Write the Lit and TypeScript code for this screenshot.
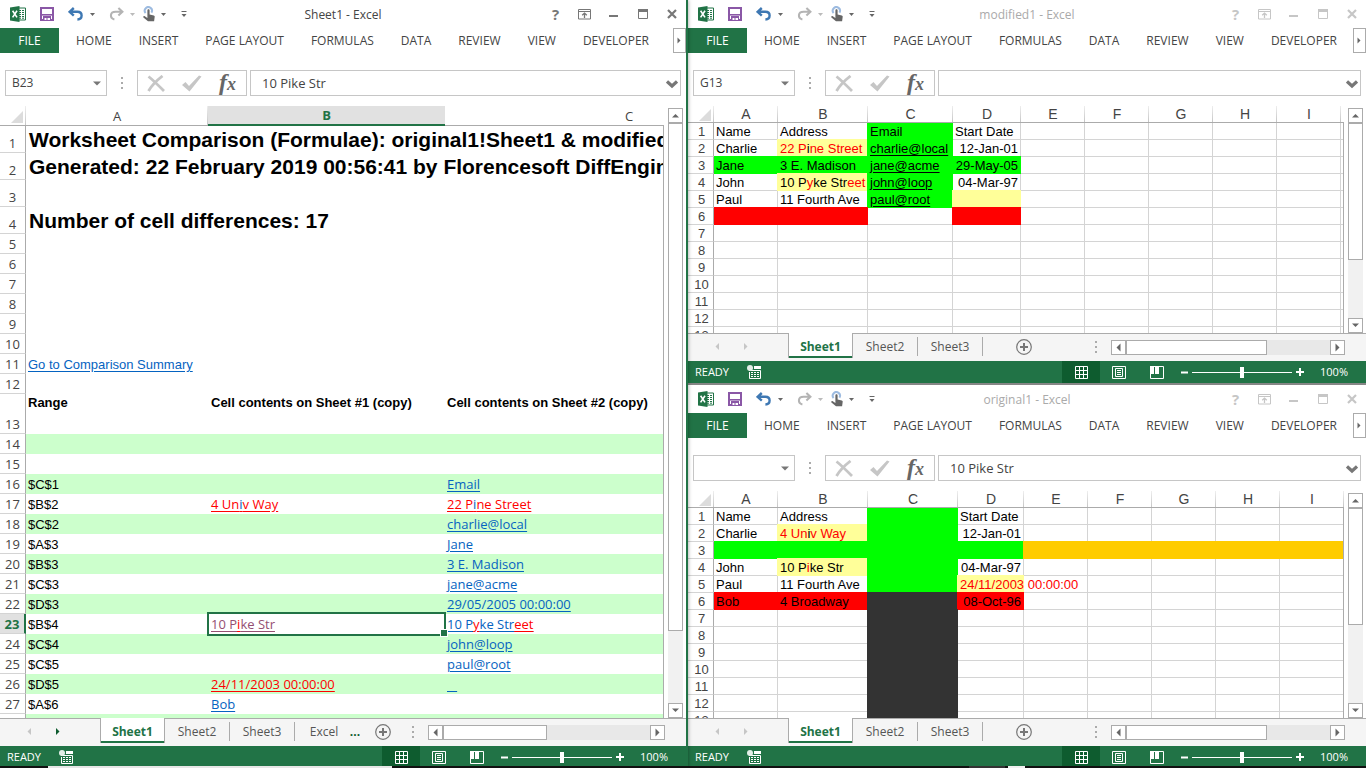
import { LitElement, html, css, nothing } from "lit";
import { customElement, property } from "lit/decorators.js";
import { classMap } from "lit/directives/class-map.js";

interface Cell {
  text?: unknown;
  kind?: string;
}
interface Row {
  height: number;
  kind?: string;
  cells?: Record<string, Cell>;
}
interface Column {
  name: string;
  width: number;
}
interface Book {
  title: string;
  active: boolean;
  cellName: string;
  formula: string;
  theme: "report" | "data";
  columns: Column[];
  rows: Row[];
  selectedColumn?: string;
  selectedRow?: number;
  tabs: string[];
  moreTabs: boolean;
  vThumb: number;
  hThumb: number;
}

const red = (t: string) => html`<span class="red">${t}</span>`;
const ink = (t: string) => html`<span class="ink">${t}</span>`;
const link = (t: unknown, kind = "") => html`<a class="link ${kind}" href="#">${t}</a>`;

const caret = html`<svg class="caret" width="5" height="3" viewBox="0 0 5 3"><path d="M0 0h5L2.5 3z" fill="currentColor" /></svg>`;

const arrow = (d: string) => html`<svg width="9" height="9" viewBox="0 0 9 9"><path d=${d} fill="currentColor" /></svg>`;
const ARROW = {
  left: "M6.5 0.5v8L2.5 4.5z",
  right: "M2.5 0.5v8L6.5 4.5z",
  up: "M1 6.5h7L4.5 3z",
  down: "M1 2.5h7L4.5 6z",
};

const excelLogo = html`<svg width="16" height="16" viewBox="0 0 16 16">
  <path d="M8 2h7.5v12H8z" fill="#fff" stroke="#217346" />
  <path d="M9 4.5h2M12 4.5h2M9 6.5h2M12 6.5h2M9 8.5h2M12 8.5h2M9 10.5h2M12 10.5h2M9 12.2h2M12 12.2h2" stroke="#217346" stroke-width="1" />
  <path d="M0 1.6L9.5 0v16L0 14.4z" fill="#217346" />
  <path d="M2.6 4.8l4.4 6.6M7 4.8l-4.4 6.6" stroke="#fff" stroke-width="1.6" fill="none" />
</svg>`;

const saveIcon = html`<svg width="14" height="14" viewBox="0 0 14 14">
  <path d="M1 1h12v12H1z" fill="#fff" stroke="#8a57a6" stroke-width="2" />
  <path d="M1 7h12v1.6H1z" fill="#8a57a6" />
  <path d="M3 9h8v5H3z" fill="#8a57a6" />
  <path d="M4.5 11h2v2h-2zM7.5 11h2.5v2H7.5z" fill="#fff" />
</svg>`;

const undoIcon = html`<svg width="16" height="14" viewBox="0 0 16 14">
  <path d="M5.8 1L1.6 4.8 5.8 8.6M2 4.8h7.4c5.6 0 5.6 7.4 0 7.7" fill="none" stroke="#3e78b3" stroke-width="2.4" />
</svg>`;

const redoIcon = html`<svg width="15" height="14" viewBox="0 0 15 14">
  <path d="M9.4 1l4 3.8-4 3.8M13 4.8H6.6c-6 0-6 6.4-1.2 7.6" fill="none" stroke="#b4b4b4" stroke-width="2.1" />
</svg>`;

const touchIcon = html`<svg width="12" height="16" viewBox="0 0 12 16">
  <path d="M2.6 7A3.6 3.6 0 1 1 8.4 6.6" fill="none" stroke="#9dbbe0" stroke-width="2" />
  <path d="M4.4 4.4c0-1.4 2.2-1.4 2.2 0v4l4.2 1c.8.2 1 .6.9 1.4l-.6 4.4H5L.4 11.4c-.5-.8.6-1.7 1.4-1.1L4.4 12z" fill="#666" />
</svg>`;

const customizeIcon = html`<svg width="7" height="8" viewBox="0 0 7 8">
  <path d="M0.5 1.5h5" stroke="#666" /><path d="M0.5 4h5L3 7z" fill="#666" />
</svg>`;

const recordIcon = html`<svg width="14" height="14" viewBox="0 0 14 14">
  <path d="M2 5.5h11.5v8H2.5V7" fill="none" stroke="#fff" />
  <path d="M7 1h7v3H7z" fill="#fff" />
  <path d="M4 7.5h2M7 7.5h2M10 7.5h2M4 9.5h2M7 9.5h2M10 9.5h2M4 11.5h2M7 11.5h2M10 11.5h2" stroke="#fff" />
  <circle cx="3" cy="3" r="3" fill="#e3efe8" />
</svg>`;

@customElement("excel-window")
export class ExcelWindow extends LitElement {
  @property({ attribute: false }) book!: Book;

  static styles = css`
    :host {
      display: flex;
      flex-direction: column;
      min-width: 0;
      min-height: 0;
      overflow: hidden;
      background: #fff;
      color: #444;
      font: 12px/16px "Open Sans", "Noto Sans", sans-serif;
    }
    * { box-sizing: border-box; }
    svg { display: block; }
    button, input {
      font: inherit;
      color: inherit;
      background: none;
      border: 0;
      padding: 0;
      margin: 0;
      border-radius: 0;
      outline: 0;
    }
    button { display: flex; align-items: center; justify-content: center; }

    .titlebar {
      display: grid;
      grid-template-columns: 1fr auto 1fr;
      align-items: center;
      height: 28px;
      flex: none;
    }
    .quick {
      display: grid;
      grid-template-columns: 30px 28px 41px 34px 38px 10px;
      align-items: center;
      justify-items: start;
      padding-left: 10px;
    }
    .quick .pair { display: flex; align-items: center; gap: 6px; }
    .caret { color: #666; }
    .faint { color: #bbb; }
    .title { color: #444; padding-top: 2px; }
    .controls {
      display: grid;
      grid-template-columns: repeat(5, 29px);
      justify-content: end;
      height: 28px;
      color: #777;
    }
    .inactive .title { color: #aaa; }
    .inactive .controls { color: #c6c6c6; }
    .help { font-weight: 700; font-size: 15px; }

    .ribbon { display: flex; height: 25px; flex: none; }
    .ribbon a {
      display: flex;
      align-items: center;
      padding: 0 14px 0 13px;
      color: #444;
      text-decoration: none;
      white-space: nowrap;
    }
    .ribbon a.file {
      padding: 0;
      justify-content: center;
      width: 59px;
      margin-right: 4px;
      background: #217346;
      color: #fff;
    }
    .more { margin-left: auto; width: 13px; border: 1px solid #ababab; color: #666; flex: none; }

    .formulabar {
      display: flex;
      align-items: center;
      height: 53px;
      padding: 7px 5px 0;
      flex: none;
      font-size: 13px;
    }
    .box { display: flex; align-items: center; height: 26px; border: 1px solid #c6c6c6; }
    .namebox { width: 102px; }
    .namebox input { flex: 1; min-width: 0; padding-left: 6px; font-size: 12px; }
    .namebox button { width: 19px; color: #777; }
    .dots { width: 30px; color: #ababab; display: flex; justify-content: center; }
    .tools { width: 110px; justify-content: space-between; padding: 0 10px 0 9px; }
    .fx { font: italic 700 24px/24px "Liberation Serif", serif; color: #666; align-items: baseline; }
    .fx small { font-size: 18px; }
    .entry { flex: 1; min-width: 0; margin-left: 3px; }
    .entry input { flex: 1; min-width: 0; padding-left: 11px; }
    .entry button { width: 17px; color: #777; padding-top: 2px; }

    .body { display: flex; flex: 1; min-height: 0; }
    .sheet { position: relative; flex: 1; min-width: 0; overflow: hidden; }
    .sheet::after {
      content: "";
      position: absolute;
      top: 16px;
      right: 0;
      bottom: 0;
      border-right: 1px solid #ababab;
    }
    .report.sheet::after { top: 19px; }
    table { table-layout: fixed; border-collapse: separate; border-spacing: 0; }
    th { font-weight: 400; padding: 0; text-align: center; color: #444; }
    td { padding: 0 2px; white-space: nowrap; color: #000; text-align: left; }

    thead th {
      border-bottom: 1px solid #ababab;
      background: linear-gradient(#eee, #c6c6c6) right / 1px 100% no-repeat;
    }
    tbody th {
      border-right: 1px solid #ababab;
      border-bottom: 1px solid #d4d4d4;
    }
    .corner svg { margin: 2px 3px 0 auto; }

    .data thead tr { height: 17px; }
    .data thead th { font: 14px/15px "Liberation Sans", Arial, sans-serif; }
    .data tbody { font: 13px/15px "Liberation Sans", Arial, sans-serif; }
    .data tbody th { padding-left: 2px; }
    .data td { border-right: 1px solid #d4d4d4; border-bottom: 1px solid #d4d4d4; }
    .data td.right { text-align: right; }
    .data .fill { background: var(--fill); border-color: var(--fill); }
    .data tr + tr td.fill { box-shadow: 0 -1px var(--fill); }
    .data td + td.fill { box-shadow: -1px 0 var(--fill); }
    .data tr + tr td + td.fill { box-shadow: -1px 0 var(--fill), 0 -1px var(--fill), -1px -1px var(--fill); }
    .lime { --fill: #00ff00; }
    .yellow { --fill: #ffff99; }
    .crimson { --fill: #ff0000; }
    .amber { --fill: #ffcc00; }
    .coal { --fill: #333333; }
    .red { color: #ff0000; }
    .ink { color: #000; }
    .data .link { color: #000; }

    .report thead tr { height: 20px; }
    .report thead th { font-size: 13px; line-height: 18px; }
    .report thead th.picked {
      background: #e1e1e1;
      border-bottom: 2px solid #217346;
      color: #217346;
      font-weight: 700;
      line-height: 16px;
    }
    .report tbody { font: 13px/19px "Liberation Sans", Arial, sans-serif; }
    .report tbody th { font: 13px/18px "Open Sans", "Noto Sans", sans-serif; vertical-align: bottom; }
    .report tbody th.picked {
      background: #e1e1e1;
      border-right: 2px solid #217346;
      color: #217346;
      font-weight: 700;
    }
    .report .band td { background: #ccffcc; }
    .report td.heading { font-size: 21px; line-height: 26px; font-weight: 700; padding-left: 3px; }
    .report td.bold { font-weight: 700; vertical-align: top; line-height: 17px; }
    .report td.ui { font-family: "Open Sans", "Noto Sans", sans-serif; }
    .report td:nth-child(3) { padding-left: 3px; }
    .link { color: #0563c1; text-decoration: underline; text-underline-offset: 2px; }
    .link .red { text-decoration: underline; }
    .link.red { color: #ff0000; }
    .link.red .ink { color: #0563c1; }
    .link.visited { color: #954f72; }
    td.cursor { position: relative; }
    td.cursor::before {
      content: "";
      position: absolute;
      inset: -2px -1px -2px -1px;
      border: 2px solid #217346;
      pointer-events: none;
    }
    td.cursor::after {
      content: "";
      position: absolute;
      right: -3px;
      bottom: -3px;
      width: 6px;
      height: 6px;
      border: 1px solid #fff;
      background: #217346;
    }

    .vscroll {
      display: flex;
      flex-direction: column;
      width: 15px;
      margin: 2px 3px 0 4px;
      background: #f1f1f1;
      flex: none;
    }
    .scrollbtn {
      width: 15px;
      height: 15px;
      flex: none;
      border: 1px solid #ababab;
      background: #fff;
      color: #666;
    }
    .track { flex: 1; min-width: 0; min-height: 0; }
    .thumb { background: #fff; border: 1px solid #ababab; }
    .vscroll .thumb { width: 15px; }

    .strip {
      display: flex;
      height: 28px;
      flex: none;
      background: #f5f5f5;
      border-top: 1px solid #ababab;
      padding-right: 21px;
    }
    .nav { display: flex; width: 100px; padding: 0 20px 0 15px; gap: 1px; height: 25px; }
    .nav button { width: 28px; color: #c6c6c6; }
    .nav button.on { color: #0e5c2f; }
    .tabs { display: flex; height: 24px; }
    .tabs button {
      width: 65px;
      color: #555;
      border-right: 1px solid #ababab;
      margin: 3px 0 2px;
    }
    .tabs button.current {
      width: 65px;
      margin: -1px 0 0;
      padding-top: 2px;
      background: #fff;
      color: #217346;
      font-weight: 700;
      border: solid #ababab;
      border-width: 0 1px 0 1px;
      box-shadow: inset 0 -2px #217346;
    }
    .tabs button.cut { width: 44px; border: 0; padding-left: 14px; }
    .tabs button.ellipsis { width: 32px; border: 0; color: #0e5c2f; font-weight: 700; }
    .add { width: 16px; height: 25px; margin-left: 33px; color: #777; }
    .add.near { margin-left: 4px; }
    .strip .dots { margin-left: auto; height: 25px; align-items: center; }
    .hscroll {
      display: flex;
      width: 35.6%;
      height: 15px;
      margin-top: 6px;
      background: #e8e8e8;
      flex: none;
    }
    .hscroll .thumb { height: 15px; }

    .status {
      display: flex;
      align-items: center;
      height: 22px;
      flex: none;
      padding: 0 18px 0 7px;
      background: #217346;
      color: #fff;
      font-size: 11px;
    }
    .status .rec { margin: 0 auto 0 18px; }
    .views { display: flex; height: 22px; }
    .views button { width: 38px; }
    .views button.on { background: #0e5c2f; }
    .sign { width: 16px; height: 22px; }
    .zoom {
      appearance: none;
      width: 100px;
      height: 22px;
      background: linear-gradient(#fff, #fff) center / 100% 1px no-repeat;
    }
    .zoom::-webkit-slider-thumb { appearance: none; width: 4px; height: 11px; background: #fff; }
    .percent { width: 40px; text-align: right; }
  `;

  private renderTitle(b: Book) {
    return html`<header class="titlebar">
      <div class="quick">
        ${excelLogo}
        <button aria-label="Save">${saveIcon}</button>
        <button class="pair" aria-label="Undo">${undoIcon}${caret}</button>
        <button class="pair" aria-label="Redo">${redoIcon}<svg class="faint" width="5" height="3" viewBox="0 0 5 3"><path d="M0 0h5L2.5 3z" fill="currentColor" /></svg></button>
        <button class="pair" aria-label="Touch mode">${touchIcon}${caret}</button>
        <button aria-label="Customize">${customizeIcon}</button>
      </div>
      <div class="title">${b.title} - Excel</div>
      <div class="controls">
        <button class="help" aria-label="Help">?</button>
        <button aria-label="Ribbon display">
          <svg width="13" height="11" viewBox="0 0 13 11"><path d="M.5.5h12v9.5H.5zM.5 2.5h12" fill="none" stroke="currentColor" /><path d="M6.5 4v5M4.2 6.3l2.3-2.2 2.3 2.2" fill="none" stroke="currentColor" stroke-width="1.3" /></svg>
        </button>
        <button aria-label="Minimize"><svg width="9" height="10" viewBox="0 0 9 10"><path d="M0 6h9v2H0z" fill="currentColor" /></svg></button>
        <button aria-label="Maximize"><svg width="10" height="10" viewBox="0 0 10 10"><path d="M.5 1.5h9v8h-9z" fill="none" stroke="currentColor" /><path d="M0 0h10v3H0z" fill="currentColor" /></svg></button>
        <button aria-label="Close"><svg width="10" height="10" viewBox="0 0 10 10"><path d="M1 1l8 8M9 1L1 9" stroke="currentColor" stroke-width="2.2" /></svg></button>
      </div>
    </header>`;
  }

  private renderRibbon() {
    const names = ["HOME", "INSERT", "PAGE LAYOUT", "FORMULAS", "DATA", "REVIEW", "VIEW", "DEVELOPER"];
    return html`<nav class="ribbon">
      <a class="file" href="#">FILE</a>
      ${names.map((n) => html`<a href="#">${n}</a>`)}
      <button class="more" aria-label="More tabs">${arrow("M2.5 1.5v6L5.5 4.5z")}</button>
    </nav>`;
  }

  private dots() {
    return html`<span class="dots"><svg width="2" height="12" viewBox="0 0 2 12"><path d="M0 0h2v2H0zM0 5h2v2H0zM0 10h2v2H0z" fill="currentColor" /></svg></span>`;
  }

  private renderFormula(b: Book) {
    return html`<div class="formulabar">
      <div class="box namebox">
        <input aria-label="Name box" .value=${b.cellName} />
        <button aria-label="Names"><svg width="8" height="5" viewBox="0 0 8 5"><path d="M0 .5h8L4 4.5z" fill="currentColor" /></svg></button>
      </div>
      ${this.dots()}
      <div class="box tools">
        <button aria-label="Cancel"><svg width="18" height="17" viewBox="0 0 18 17"><path d="M1.5 1.5C6 5 12 11 17 16" fill="none" stroke="#c6c6c6" stroke-width="2.8" /><path d="M15.5 1C11 4.500 5 10 1.500 16" fill="none" stroke="#c6c6c6" stroke-width="2.800" /></svg></button>
        <button aria-label="Enter"><svg width="20" height="17" viewBox="0 0 20 17"><path d="M0 10L3.500 7 7 11 17 0.500l2.500 1L7.500 16.500z" fill="#c6c6c6" /></svg></button>
        <button class="fx" aria-label="Insert function">f<small>x</small></button>
      </div>
      <div class="box entry">
        <input aria-label="Formula" .value=${b.formula} />
        <button aria-label="Expand"><svg width="12" height="9" viewBox="0 0 12 9"><path d="M1 1.500l5 4.500 5-4.500" fill="none" stroke="currentColor" stroke-width="3.200" /></svg></button>
      </div>
    </div>`;
  }

  private renderSheet(b: Book) {
    const total = b.columns.reduce((sum, c) => sum + c.width, 26);
    return html`<div class="sheet ${b.theme}">
      <table style="width:${total}px">
        <colgroup>
          <col style="width:26px" />
          ${b.columns.map((c) => html`<col style="width:${c.width}px" />`)}
        </colgroup>
        <thead>
          <tr>
            <th class="corner"><svg width="12" height="12" viewBox="0 0 12 12"><path d="M12 0v12H0z" fill="#dcdcdc" /></svg></th>
            ${b.columns.map((c) => html`<th class=${classMap({ picked: c.name === b.selectedColumn })}>${c.name}</th>`)}
          </tr>
        </thead>
        <tbody>
          ${b.rows.map(
            (r, i) => html`<tr class=${r.kind ?? ""} style="height:${r.height}px">
              <th class=${classMap({ picked: i + 1 === b.selectedRow })}>${i + 1}</th>
              ${b.columns.map((c) => {
                const cell = r.cells?.[c.name];
                return html`<td class=${cell?.kind ?? ""}>${cell?.text ?? nothing}</td>`;
              })}
            </tr>`
          )}
        </tbody>
      </table>
    </div>`;
  }

  private renderStrip(b: Book) {
    return html`<div class="strip">
      <div class="nav">
        <button aria-label="Previous sheets">${arrow("M6 1v7L2.500 4.500z")}</button>
        <button class=${classMap({ on: b.moreTabs })} aria-label="Next sheets">${arrow("M2 1v7L5.500 4.500z")}</button>
      </div>
      <div class="tabs">
        ${b.tabs.map((t, i) => html`<button class=${classMap({ current: i === 0, cut: i === 3 })}>${t}</button>`)}
        ${b.moreTabs ? html`<button class="ellipsis">...</button>` : nothing}
      </div>
      <button class=${classMap({ add: true, near: b.moreTabs })} aria-label="New sheet">
        <svg width="16" height="16" viewBox="0 0 16 16"><circle cx="8" cy="8" r="7.300" fill="none" stroke="currentColor" stroke-width="1.200" /><path d="M8 4v8M4 8h8" stroke="currentColor" stroke-width="2" /></svg>
      </button>
      ${this.dots()}
      <div class="hscroll">
        <button class="scrollbtn" aria-label="Scroll left">${arrow(ARROW.left)}</button>
        <div class="track"><div class="thumb" style="width:${b.hThumb}%"></div></div>
        <button class="scrollbtn" aria-label="Scroll right">${arrow(ARROW.right)}</button>
      </div>
    </div>`;
  }

  private renderStatus() {
    return html`<footer class="status">
      <span>READY</span>
      <span class="rec">${recordIcon}</span>
      <div class="views">
        <button class="on" aria-label="Normal"><svg width="13" height="13" viewBox="0 0 13 13"><path d="M.5.5h12v12H.5zM4.500.5v12M8.500.5v12M.5 4.500h12M.5 8.500h12" fill="none" stroke="#fff" /></svg></button>
        <button aria-label="Page layout"><svg width="14" height="13" viewBox="0 0 14 13"><path d="M.5.5h13v12H.5zM3.500 2.500h7v8h-7zM5 4.500h4M5 6.500h4M5 8.500h4" fill="none" stroke="#fff" /></svg></button>
        <button aria-label="Page break"><svg width="14" height="13" viewBox="0 0 14 13"><path d="M.5.5h13v12H.5z" fill="none" stroke="#fff" /><path d="M0 0h4v8H0zM5 0h4v8H5z" fill="#fff" /></svg></button>
      </div>
      <button class="sign" aria-label="Zoom out"><svg width="7" height="7" viewBox="0 0 7 7"><path d="M0 2.500h7v2H0z" fill="#fff" /></svg></button>
      <input class="zoom" type="range" aria-label="Zoom" min="0" max="100" value="50" />
      <button class="sign" aria-label="Zoom in"><svg width="8" height="8" viewBox="0 0 8 8"><path d="M0 3h3V0h2v3h3v2H5v3H3V5H0z" fill="#fff" /></svg></button>
      <span class="percent">100%</span>
    </footer>`;
  }

  render() {
    const b = this.book;
    return html`
      <div class=${classMap({ inactive: !b.active })}>${this.renderTitle(b)}</div>
      ${this.renderRibbon()}
      ${this.renderFormula(b)}
      <div class="body">
        ${this.renderSheet(b)}
        <div class="vscroll">
          <button class="scrollbtn" aria-label="Scroll up">${arrow(ARROW.up)}</button>
          <div class="track"><div class="thumb" style="height:${b.vThumb}%"></div></div>
          <button class="scrollbtn" aria-label="Scroll down">${arrow(ARROW.down)}</button>
        </div>
      </div>
      ${this.renderStrip(b)}
      ${this.renderStatus()}
    `;
  }
}

const blank = (height: number, count: number): Row[] => Array.from({ length: count }, () => ({ height }));

const diff = (range: string, band: boolean, first?: unknown, second?: unknown, cursor = false): Row => ({
  height: 20,
  kind: band ? "band" : "",
  cells: {
    A: { text: range },
    B: { text: first, kind: cursor ? "ui cursor" : "ui" },
    C: { text: second, kind: "ui" },
  },
});

const heading = (text: string): Row => ({ height: 27, cells: { A: { text, kind: "heading" } } });

const report: Book = {
  title: "Sheet1",
  active: true,
  cellName: "B23",
  formula: "10 Pike Str",
  theme: "report",
  columns: [
    { name: "A", width: 182 },
    { name: "B", width: 237 },
    { name: "C", width: 368 },
  ],
  selectedColumn: "B",
  selectedRow: 23,
  rows: [
    heading("Worksheet Comparison (Formulae): original1!Sheet1 & modified1!Sheet1"),
    heading("Generated: 22 February 2019 00:56:41 by Florencesoft DiffEngineX"),
    { height: 27 },
    heading("Number of cell differences: 17"),
    ...blank(20, 6),
    { height: 20, cells: { A: { text: link("Go to Comparison Summary") } } },
    { height: 20 },
    {
      height: 40,
      kind: "heads",
      cells: {
        A: { text: "Range", kind: "bold" },
        B: { text: "Cell contents on Sheet #1 (copy)", kind: "bold" },
        C: { text: "Cell contents on Sheet #2 (copy)", kind: "bold" },
      },
    },
    { height: 20, kind: "band" },
    { height: 20 },
    diff("$C$1", true, undefined, link("Email")),
    diff("$B$2", false, link(html`4 Un${ink("i")}v Way`, "red"), link(html`22 P${ink("i")}ne Street`, "red")),
    diff("$C$2", true, undefined, link("charlie@local")),
    diff("$A$3", false, undefined, link("Jane")),
    diff("$B$3", true, undefined, link("3 E. Madison")),
    diff("$C$3", false, undefined, link("jane@acme")),
    diff("$D$3", true, undefined, link("29/05/2005 00:00:00")),
    diff("$B$4", false, link(html`10 P${red("i")}ke Str`, "visited"), link(html`10 P${red("y")}ke Str${red("eet")}`), true),
    diff("$C$4", true, undefined, link("john@loop")),
    diff("$C$5", false, undefined, link("paul@root")),
    diff("$D$5", true, link("24/11/2003 00:00:00", "red"), link("\u00a0\u00a0\u00a0")),
    diff("$A$6", false, link("Bob")),
    { height: 20, kind: "band" },
  ],
  tabs: ["Sheet1", "Sheet2", "Sheet3", "Excel"],
  moreTabs: true,
  vThumb: 87.5,
  hThumb: 50,
};

const wide = (names: string) => names.split("").map((name) => ({ name, width: 64 }));

const modified: Book = {
  title: "modified1",
  active: false,
  cellName: "G13",
  formula: "",
  theme: "data",
  columns: [
    { name: "A", width: 64 },
    { name: "B", width: 90 },
    { name: "C", width: 85 },
    { name: "D", width: 68 },
    ...wide("EFGHIJ"),
  ],
  rows: [
    { height: 17, cells: { A: { text: "Name" }, B: { text: "Address" }, C: { text: "Email", kind: "fill lime" }, D: { text: "Start Date" } } },
    { height: 17, cells: { A: { text: "Charlie" }, B: { text: html`${red("22 P")}i${red("ne Street")}`, kind: "fill yellow" }, C: { text: link("charlie@local"), kind: "fill lime" }, D: { text: "12-Jan-01", kind: "right" } } },
    { height: 17, cells: { A: { text: "Jane", kind: "fill lime" }, B: { text: "3 E. Madison", kind: "fill lime" }, C: { text: link("jane@acme"), kind: "fill lime" }, D: { text: "29-May-05", kind: "fill lime right" } } },
    { height: 17, cells: { A: { text: "John" }, B: { text: html`10 P${red("y")}ke Str${red("eet")}`, kind: "fill yellow" }, C: { text: link("john@loop"), kind: "fill lime" }, D: { text: "04-Mar-97", kind: "right" } } },
    { height: 17, cells: { A: { text: "Paul" }, B: { text: "11 Fourth Ave" }, C: { text: link("paul@root"), kind: "fill lime" }, D: { kind: "fill yellow" } } },
    { height: 17, cells: { A: { kind: "fill crimson" }, B: { kind: "fill crimson" }, D: { kind: "fill crimson" } } },
    ...blank(17, 7),
  ],
  tabs: ["Sheet1", "Sheet2", "Sheet3"],
  moreTabs: false,
  vThumb: 70,
  hThumb: 69,
};

const amber = Object.fromEntries("EFGHIJ".split("").map((n) => [n, { kind: "fill amber" }]));

const original: Book = {
  title: "original1",
  active: false,
  cellName: "",
  formula: "10 Pike Str",
  theme: "data",
  columns: [
    { name: "A", width: 64 },
    { name: "B", width: 90 },
    { name: "C", width: 90 },
    { name: "D", width: 66 },
    ...wide("EFGHIJ"),
  ],
  rows: [
    { height: 17, cells: { A: { text: "Name" }, B: { text: "Address" }, C: { kind: "fill lime" }, D: { text: "Start Date" } } },
    { height: 17, cells: { A: { text: "Charlie" }, B: { text: html`${red("4 Un")}i${red("v Way")}`, kind: "fill yellow" }, C: { kind: "fill lime" }, D: { text: "12-Jan-01", kind: "right" } } },
    { height: 17, cells: { A: { kind: "fill lime" }, B: { kind: "fill lime" }, C: { kind: "fill lime" }, D: { kind: "fill lime" }, ...amber } },
    { height: 17, cells: { A: { text: "John" }, B: { text: html`10 P${red("i")}ke Str`, kind: "fill yellow" }, C: { kind: "fill lime" }, D: { text: "04-Mar-97", kind: "right" } } },
    { height: 17, cells: { A: { text: "Paul" }, B: { text: "11 Fourth Ave" }, C: { kind: "fill lime" }, D: { text: red("24/11/2003 00:00:00"), kind: "fill yellow" } } },
    { height: 17, cells: { A: { text: "Bob", kind: "fill crimson" }, B: { text: "4 Broadway", kind: "fill crimson" }, C: { kind: "fill coal" }, D: { text: "08-Oct-96", kind: "fill crimson right" } } },
    ...Array.from({ length: 7 }, () => ({ height: 17, cells: { C: { kind: "fill coal" } } })),
  ],
  tabs: ["Sheet1", "Sheet2", "Sheet3"],
  moreTabs: false,
  vThumb: 60,
  hThumb: 69,
};

@customElement("app-root")
export class AppRoot extends LitElement {
  static styles = css`
    :host {
      display: grid;
      grid-template-columns: minmax(0, 688fr) minmax(0, 678fr);
      position: relative;
      height: 100vh;
      overflow: hidden;
    }
    .main {
      border-right: 2px solid #217346;
      position: relative;
      z-index: 1;
      box-shadow: 0 0 4px rgba(0, 0, 0, 0.4);
    }
    .side { display: flex; flex-direction: column; min-width: 0; min-height: 0; }
    .side excel-window { flex: 1 1 0; }
    .upper { border-bottom: 2px solid #868686; }
    .taskbar {
      position: absolute;
      z-index: 2;
      left: 0;
      right: 0;
      bottom: 0;
      height: 2px;
      display: flex;
      background: #111;
    }
    .start { width: 48px; }
    .search { width: 344px; background: #e6e6e6; }
    .task { width: 36px; margin-left: 577px; background: #333; }
    .focus { width: 17px; margin-left: 3px; background: #f0f0f0; }
  `;

  render() {
    return html`
      <excel-window class="main" .book=${report}></excel-window>
      <div class="side">
        <excel-window class="upper" .book=${modified}></excel-window>
        <excel-window .book=${original}></excel-window>
      </div>
      <div class="taskbar">
        <span class="start"></span><span class="search"></span><span class="task"></span><span class="focus"></span>
      </div>
    `;
  }
}
